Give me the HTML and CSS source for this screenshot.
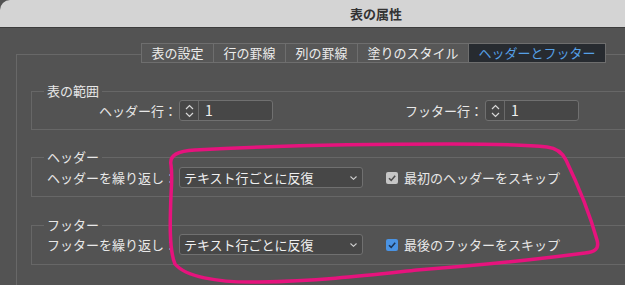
FILE: index.html
```html
<!DOCTYPE html>
<html lang="ja">
<head>
  <meta charset="UTF-8">
  <title>表の属性</title>
  <link rel="stylesheet" href="styles.css">
</head>
<body>
  <div class="titlebar">表の属性</div>

  <div class="frame">
    <!-- タブ -->
    <div class="tabs">
      <span class="tab">表の設定</span>
      <span class="tab">行の罫線</span>
      <span class="tab">列の罫線</span>
      <span class="tab">塗りのスタイル</span>
      <span class="tab active">ヘッダーとフッター</span>
    </div>

    <!-- 表の範囲 -->
    <fieldset class="group range">
      <legend>表の範囲</legend>
      <div class="row">
        <span class="field-label">ヘッダー行：</span>
        <div class="spinner">
          <span class="spin-arrows">
            <svg width="9" height="16" viewBox="0 0 9 16"><path d="M1 6 L4.5 2.5 L8 6 M1 10 L4.5 13.5 L8 10" fill="none" stroke="#d8d8d8" stroke-width="1.2"/></svg>
          </span>
          <span class="spin-value">1</span>
        </div>
        <span class="field-label far">フッター行：</span>
        <div class="spinner">
          <span class="spin-arrows">
            <svg width="9" height="16" viewBox="0 0 9 16"><path d="M1 6 L4.5 2.5 L8 6 M1 10 L4.5 13.5 L8 10" fill="none" stroke="#d8d8d8" stroke-width="1.2"/></svg>
          </span>
          <span class="spin-value">1</span>
        </div>
      </div>
    </fieldset>

    <!-- ヘッダー -->
    <fieldset class="group header">
      <legend>ヘッダー</legend>
      <div class="row">
        <span class="field-label">ヘッダーを繰り返し：</span>
        <div class="select">
          <span>テキスト行ごとに反復</span>
          <svg width="7" height="4" viewBox="0 0 7 4"><path d="M0.5 0.5 L3.5 3.3 L6.5 0.5" fill="none" stroke="#d0d0d0" stroke-width="1.1"/></svg>
        </div>
        <span class="check gray">
          <svg width="12" height="12" viewBox="0 0 12 12"><path d="M3 6.2 L5.2 8.4 L9.2 3.8" fill="none" stroke="#4e4e4e" stroke-width="1.6"/></svg>
        </span>
        <span class="check-label">最初のヘッダーをスキップ</span>
      </div>
    </fieldset>

    <!-- フッター -->
    <fieldset class="group footer">
      <legend>フッター</legend>
      <div class="row">
        <span class="field-label">フッターを繰り返し：</span>
        <div class="select">
          <span>テキスト行ごとに反復</span>
          <svg width="7" height="4" viewBox="0 0 7 4"><path d="M0.5 0.5 L3.5 3.3 L6.5 0.5" fill="none" stroke="#d0d0d0" stroke-width="1.1"/></svg>
        </div>
        <span class="check blue">
          <svg width="12" height="12" viewBox="0 0 12 12"><path d="M3 6.2 L5.2 8.4 L9.2 3.8" fill="none" stroke="#1c3454" stroke-width="1.6"/></svg>
        </span>
        <span class="check-label">最後のフッターをスキップ</span>
      </div>
    </fieldset>
  </div>

  <!-- 手書きの囲み -->
  <svg class="markup" width="625" height="285" viewBox="0 0 625 285">
    <path d="M171,165 C169,155 178,151 195,150 C250,147 330,144 450,144 C500,144 530,145 547,147 C556,148 562,152 566,160 C578,185 590,215 597,240 C600,250 593,252 585,253 C540,259 470,266 417,270 C370,275 320,281 260,282 C215,283 185,276 175,264 C169,250 170,220 171,195 C172,180 172,172 171,165 Z"
          fill="none" stroke="#e6137d" stroke-width="3.5" stroke-linejoin="round"/>
  </svg>
</body>
</html>
```

FILE: styles.css
```css
html, body {
  margin: 0;
  width: 625px;
  height: 285px;
  overflow: hidden;
  background: #535353;
  font-family: "Noto Sans CJK JP", "Noto Sans", sans-serif;
  font-size: 13px;
  color: #e8e8e8;
}

body {
  position: relative;
}

.titlebar {
  height: 27px;
  line-height: 27px;
  padding-left: 350px;
  background: #d4d4d4;
  border-bottom: 1px solid #3c3c3c;
  border-top-left-radius: 10px;
  color: #333333;
  font-weight: 600;
}

.frame {
  margin: 26px 0 0 16px;
  border-top: 1px solid #686868;
  border-left: 1px solid #686868;
  height: 230px;
}

.tabs {
  display: flex;
  width: max-content;
  margin: -12px 0 0 124px;
  border: 1px solid #6e6e6e;
  background: #575757;
}

.tab {
  padding: 0 9.5px;
  line-height: 18px;
  color: #ececec;
  border-left: 1px solid #6e6e6e;
}

.tab:first-child {
  border-left: none;
}

.tab.active {
  background: #272b30;
  color: #56a0e6;
}

.group {
  box-sizing: border-box;
  margin: 20px 0 0 14px;
  width: 594px;
  min-width: 0;
  border: 1px solid #676767;
  border-right: none;
  padding: 1px 0 8px 12px;
}

.group legend {
  padding: 0 3px;
  line-height: 16px;
}

.header {
  margin-top: 19px;
  padding-top: 2px;
}

.footer {
  margin-top: 20px;
  padding-bottom: 9px;
}

.row {
  display: flex;
  align-items: center;
  height: 21px;
}

.field-label {
  width: 133px;
  margin-right: 2px;
  text-align: right;
  line-height: 16px;
}

.field-label.far {
  width: 210px;
}

.spinner {
  display: flex;
  width: 94px;
  height: 21px;
  box-sizing: border-box;
  border: 1px solid #707070;
  border-radius: 3px;
  background: #474747;
}

.spin-arrows {
  display: flex;
  align-items: center;
  justify-content: center;
  width: 18px;
  border-right: 1px solid #6a6a6a;
}

.spin-value {
  padding-left: 6px;
  font-size: 14px;
  line-height: 19px;
  color: #f0f0f0;
}

.select {
  display: flex;
  align-items: center;
  justify-content: space-between;
  width: 184px;
  height: 21px;
  box-sizing: border-box;
  padding: 0 5px 0 4px;
  border: 1px solid #707070;
  border-radius: 3px;
  background: #474747;
  line-height: 19px;
  color: #f0f0f0;
}

.check {
  display: flex;
  align-items: center;
  justify-content: center;
  width: 12px;
  height: 12px;
  margin-left: 23px;
  border-radius: 2px;
}

.check.gray {
  background: #c6c6c6;
}

.check.blue {
  background: #4a93e3;
}

.check-label {
  margin-left: 6px;
  line-height: 16px;
}

.markup {
  position: absolute;
  left: 0;
  top: 0;
  pointer-events: none;
}
```
